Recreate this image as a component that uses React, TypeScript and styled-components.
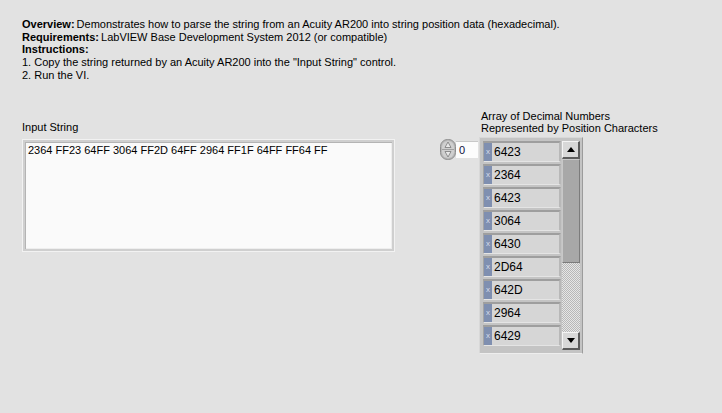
import styled, { createGlobalStyle } from "styled-components";

const GlobalStyle = createGlobalStyle`
  html, body {
    margin: 0;
    padding: 0;
    background: #e2e2e2;
  }
  body {
    font-family: "Liberation Sans", Arial, sans-serif;
    font-size: 11px;
    color: #000;
  }
`;

const values = ["6423", "2364", "6423", "3064", "6430", "2D64", "642D", "2964", "6429"];

const Page = styled.div`
  width: 722px;
  height: 413px;
  box-sizing: border-box;
  padding: 18px 0 0 22px;
  overflow: hidden;
`;

const Notes = styled.div`
  line-height: 12.7px;
`;

const Line = styled.div`
  white-space: nowrap;
`;

const Strong = styled.b`
  margin-right: 2px;
`;

const Row = styled.div`
  display: flex;
  align-items: flex-start;
  margin-top: 28px;
`;

const InputColumn = styled.div`
  display: flex;
  flex-direction: column;
  margin-top: 11px;
`;

const Label = styled.div`
  line-height: 12.5px;
  margin-bottom: 6px;
`;

const TextBox = styled.div`
  width: 373px;
  height: 113px;
  box-sizing: border-box;
  background: #fafafa;
  border: 1px solid #f2f2f2;
  box-shadow: inset 0 0 0 2px #cfcfcf, inset 1px 1px 0 2px #b4b4b4,
    inset -1px -1px 0 2px #eeeeee;
  padding: 4px 5px;
  line-height: 13px;
  white-space: nowrap;
`;

const IndexControl = styled.div`
  display: flex;
  align-items: center;
  margin: 29px 1px 0 45px;
`;

const Spinner = styled.svg`
  display: block;
`;

const IndexField = styled.div`
  width: 22px;
  height: 17px;
  box-sizing: border-box;
  background: #fcfcfc;
  border-top: 1px solid #c8c8c8;
  padding: 1px 0 0 3px;
  color: #101040;
  line-height: 14px;
`;

const ArrayColumn = styled.div`
  display: flex;
  flex-direction: column;
`;

const ArrayLabel = styled.div`
  line-height: 12.5px;
  padding-left: 2px;
  margin-bottom: 2px;
`;

const ArrayFrame = styled.div`
  display: flex;
  gap: 1px;
  width: 104px;
  box-sizing: border-box;
  padding: 3px 2px 3px 3px;
  background: #c4c4c4;
  border-top: 1px solid #d8d8d8;
  border-left: 1px solid #d8d8d8;
  border-right: 1px solid #9c9c9c;
  border-bottom: 1px solid #eeeeee;
`;

const Elements = styled.div`
  display: flex;
  flex-direction: column;
  gap: 2px;
`;

const Element = styled.div`
  display: flex;
  align-items: center;
  width: 78px;
  height: 21px;
  box-sizing: border-box;
  background: #d6d6d6;
  border-top: 2px solid #9e9e9e;
  border-left: 1px solid #a4a4a4;
  border-bottom: 1px solid #e4e4e4;
  border-right: 2px solid #b8b8b8;
`;

const Radix = styled.span`
  width: 8px;
  align-self: stretch;
  background: #7f8fb0;
  color: #d6dcea;
  font-size: 8px;
  line-height: 17px;
  text-align: center;
`;

const Value = styled.span`
  padding-left: 2px;
  font-size: 12px;
  color: #000;
`;

const ScrollBar = styled.div`
  display: flex;
  flex-direction: column;
  width: 18px;
`;

const ArrowButton = styled.div`
  height: 18px;
  box-sizing: border-box;
  display: flex;
  align-items: center;
  justify-content: center;
  background: #d8d8d8;
  border-top: 1px solid #f4f4f4;
  border-left: 1px solid #f4f4f4;
  border-right: 2px solid #5c5c5c;
  border-bottom: 2px solid #5c5c5c;
`;

const Thumb = styled.div`
  height: 104px;
  box-sizing: border-box;
  background: #a8a8a8;
  border-top: 1px solid #c8c8c8;
  border-left: 1px solid #c8c8c8;
  border-right: 1px solid #7c7c7c;
  border-bottom: 1px solid #7c7c7c;
`;

const Track = styled.div`
  height: 69px;
  background-color: #e6e6e6;
  background-image: repeating-conic-gradient(#b8b8b8 0 25%, #e6e6e6 0 50%);
  background-size: 2px 2px;
`;

const Triangle = ({ up }: { up?: boolean }) => (
  <svg width="8" height="5" viewBox="0 0 8 5">
    <polygon points={up ? "0,5 8,5 4,0" : "0,0 8,0 4,5"} fill="#000" />
  </svg>
);

export default function App() {
  return (
    <>
      <GlobalStyle />
      <Page>
        <Notes>
          <Line>
            <Strong>Overview:</Strong>Demonstrates how to parse the string from an Acuity AR200 into
            string position data (hexadecimal).
          </Line>
          <Line>
            <Strong>Requirements:</Strong>LabVIEW Base Development System 2012 (or compatible)
          </Line>
          <Line>
            <Strong>Instructions:</Strong>
          </Line>
          <Line>1. Copy the string returned by an Acuity AR200 into the "Input String" control.</Line>
          <Line>2. Run the VI.</Line>
        </Notes>
        <Row>
          <InputColumn>
            <Label>Input String</Label>
            <TextBox>2364 FF23 64FF 3064 FF2D 64FF 2964 FF1F 64FF FF64 FF</TextBox>
          </InputColumn>
          <IndexControl>
            <Spinner width="16" height="21" viewBox="0 0 16 21">
              <rect x="0.5" y="0.5" width="15" height="20" rx="7" fill="#b8b8b8" stroke="#8e8e8e" />
              <rect x="2" y="2" width="12" height="17" rx="6" fill="#cfcfcf" />
              <line x1="2" y1="10.5" x2="14" y2="10.5" stroke="#a0a0a0" />
              <polygon points="8,3 11,8.5 5,8.5" fill="#e8e8e8" stroke="#7a7a7a" strokeWidth="0.8" />
              <polygon points="8,18 11,12.5 5,12.5" fill="#e8e8e8" stroke="#7a7a7a" strokeWidth="0.8" />
            </Spinner>
            <IndexField>0</IndexField>
          </IndexControl>
          <ArrayColumn>
            <ArrayLabel>
              Array of Decimal Numbers
              <br />
              Represented by Position Characters
            </ArrayLabel>
            <ArrayFrame>
              <Elements>
                {values.map((v, i) => (
                  <Element key={i}>
                    <Radix>x</Radix>
                    <Value>{v}</Value>
                  </Element>
                ))}
              </Elements>
              <ScrollBar>
                <ArrowButton>
                  <Triangle up />
                </ArrowButton>
                <Thumb />
                <Track />
                <ArrowButton>
                  <Triangle />
                </ArrowButton>
              </ScrollBar>
            </ArrayFrame>
          </ArrayColumn>
        </Row>
      </Page>
    </>
  );
}
